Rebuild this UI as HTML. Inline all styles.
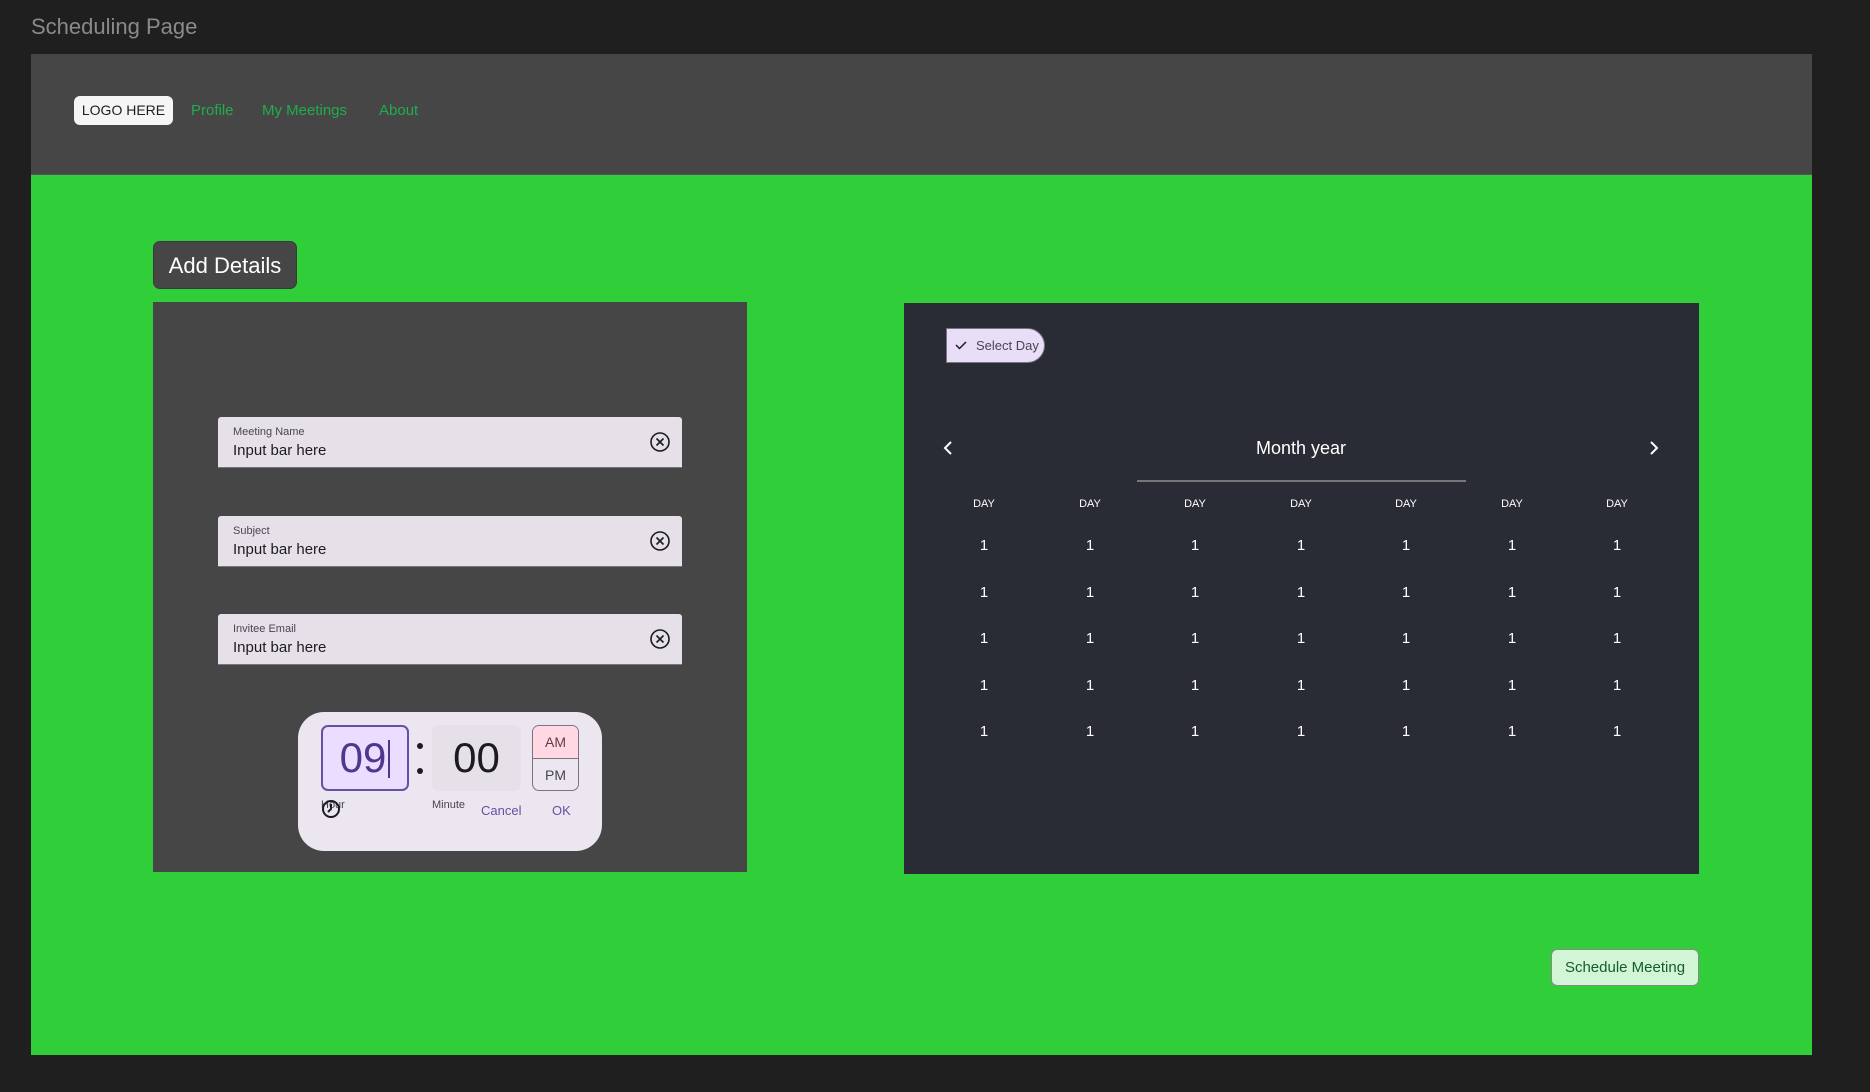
<!DOCTYPE html>
<html><head><meta charset="utf-8"><style>
*{margin:0;padding:0;box-sizing:border-box}
body{width:1870px;height:1092px;background:#1f1f1f;font-family:"Liberation Sans",sans-serif;position:relative;overflow:hidden}
.a{position:absolute}
.inp{position:absolute;left:218px;width:464px;height:51px;background:#e6e0e8;border-radius:3px 3px 0 0;border-bottom:1px solid #79747e}
.inp .l{position:absolute;left:15px;top:9px;font-size:11px;color:#49454f}
.inp .v{position:absolute;left:15px;top:25px;font-size:15px;color:#1d1b20}
.inp svg{position:absolute;left:431px;top:14px}
.c{position:absolute;width:60px;margin-left:-30px;text-align:center;color:#fff}
</style></head><body>
<div class="a" style="left:31px;top:14px;font-size:22px;color:#8a8a8a">Scheduling Page</div>
<div class="a" style="left:31px;top:54px;width:1781px;height:121px;background:#464646;border-bottom:1px solid #555"></div>
<div class="a" style="left:31px;top:175px;width:1781px;height:880px;background:#30ce38"></div>
<div class="a" style="left:74px;top:96px;width:99px;height:29px;background:#f5f5f5;border-radius:6px;font-size:14px;line-height:29px;text-align:center;color:#1e1e1e">LOGO HERE</div>
<div class="a" style="left:191px;top:102px;font-size:15px;color:#1fae4a">Profile</div>
<div class="a" style="left:262px;top:102px;font-size:15px;color:#1fae4a">My Meetings</div>
<div class="a" style="left:379px;top:102px;font-size:15px;color:#1fae4a">About</div>
<div class="a" style="left:153px;top:241px;width:144px;height:48px;background:#464646;border-radius:7px;border:1px solid #3a3a3a;color:#fff;font-size:22px;line-height:48px;text-align:center">Add Details</div>
<div class="a" style="left:153px;top:302px;width:594px;height:570px;background:#464646"></div>
<div class="inp" style="top:417px"><div class="l">Meeting Name</div><div class="v">Input bar here</div><svg width="22" height="22" viewBox="0 0 22 22"><circle cx="11" cy="11" r="9" fill="none" stroke="#1d1b20" stroke-width="1.6"/><path d="M7.5 7.5L14.5 14.5M14.5 7.5L7.5 14.5" stroke="#1d1b20" stroke-width="1.6"/></svg></div>
<div class="inp" style="top:516px"><div class="l">Subject</div><div class="v">Input bar here</div><svg width="22" height="22" viewBox="0 0 22 22"><circle cx="11" cy="11" r="9" fill="none" stroke="#1d1b20" stroke-width="1.6"/><path d="M7.5 7.5L14.5 14.5M14.5 7.5L7.5 14.5" stroke="#1d1b20" stroke-width="1.6"/></svg></div>
<div class="inp" style="top:614px"><div class="l">Invitee Email</div><div class="v">Input bar here</div><svg width="22" height="22" viewBox="0 0 22 22"><circle cx="11" cy="11" r="9" fill="none" stroke="#1d1b20" stroke-width="1.6"/><path d="M7.5 7.5L14.5 14.5M14.5 7.5L7.5 14.5" stroke="#1d1b20" stroke-width="1.6"/></svg></div>
<div class="a" style="left:298px;top:712px;width:304px;height:139px;background:#ece6f0;border-radius:26px"></div>
<div class="a" style="left:321px;top:725px;width:88px;height:66px;background:#eaddff;border:2px solid #6750a4;border-radius:7px;color:#4f378b;font-size:42px;line-height:62px;text-align:center">09<span style="display:inline-block;width:2px;height:38px;background:#4f378b;vertical-align:-6px;margin-left:2px"></span></div>
<div class="a" style="left:417px;top:743px;width:6px;height:6px;border-radius:3px;background:#1d1b20"></div>
<div class="a" style="left:417px;top:768px;width:6px;height:6px;border-radius:3px;background:#1d1b20"></div>
<div class="a" style="left:432px;top:725px;width:89px;height:66px;background:#e6e0e8;border-radius:7px;color:#1d1b20;font-size:42px;line-height:66px;text-align:center">00</div>
<div class="a" style="left:532px;top:725px;width:47px;height:66px;border:1px solid #79747e;border-radius:7px;overflow:hidden;font-size:14px;color:#1d1b20;text-align:center">
<div style="height:33px;line-height:32px;background:#ffd8e4;border-bottom:1px solid #79747e;color:#633b48">AM</div><div style="line-height:32px;color:#49454f">PM</div></div>
<div class="a" style="left:321px;top:799px;font-size:11px;color:#49454f">Hour</div>
<svg class="a" style="left:321px;top:799px" width="20" height="20" viewBox="0 0 20 20"><circle cx="10" cy="10" r="8" fill="none" stroke="#1d1b20" stroke-width="2"/><path d="M10 5V10L7 13" stroke="#1d1b20" stroke-width="2" fill="none"/></svg>
<div class="a" style="left:432px;top:799px;font-size:11px;color:#49454f">Minute</div>
<div class="a" style="left:481px;top:803px;font-size:13px;color:#6750a4">Cancel</div>
<div class="a" style="left:552px;top:803px;font-size:13px;color:#6750a4">OK</div>
<div class="a" style="left:904px;top:303px;width:795px;height:571px;background:#292c35"></div>
<div class="a" style="left:946px;top:328px;width:99px;height:35px;background:#e8def8;border:1px solid #79747e;border-radius:0 18px 18px 0;font-size:13px;color:#49454f;line-height:33px;padding-left:29px;white-space:nowrap">Select Day</div>
<svg class="a" style="left:954px;top:338px" width="14" height="14" viewBox="0 0 14 14"><path d="M2 7L5.5 10.5L12 4" stroke="#1d1b20" stroke-width="1.5" fill="none"/></svg>
<svg class="a" style="left:942px;top:440px" width="12" height="16" viewBox="0 0 12 16"><path d="M9 2L3 8L9 14" stroke="#fff" stroke-width="2" fill="none"/></svg>
<svg class="a" style="left:1648px;top:440px" width="12" height="16" viewBox="0 0 12 16"><path d="M3 2L9 8L3 14" stroke="#fff" stroke-width="2" fill="none"/></svg>
<div class="a" style="left:1151px;top:438px;width:300px;text-align:center;color:#fff;font-size:18px">Month year</div>
<div class="a" style="left:1137px;top:480px;width:329px;height:2px;background:#777"></div>
<div class="a" style="left:1551px;top:949px;width:148px;height:37px;background:#d1f5d5;border:1px solid #888;border-radius:6px;color:#155c33;font-size:15px;line-height:35px;text-align:center">Schedule Meeting</div>
<div class="a" style="left:0;top:0">
<div class="c" style="left:984px;top:498px;font-size:11px">DAY</div><div class="c" style="left:1090px;top:498px;font-size:11px">DAY</div><div class="c" style="left:1195px;top:498px;font-size:11px">DAY</div><div class="c" style="left:1301px;top:498px;font-size:11px">DAY</div><div class="c" style="left:1406px;top:498px;font-size:11px">DAY</div><div class="c" style="left:1512px;top:498px;font-size:11px">DAY</div><div class="c" style="left:1617px;top:498px;font-size:11px">DAY</div>
</div>
<div class="a" style="left:0;top:537px;font-size:15px">
<div class="c" style="left:984px;top:0">1</div><div class="c" style="left:1090px;top:0">1</div><div class="c" style="left:1195px;top:0">1</div><div class="c" style="left:1301px;top:0">1</div><div class="c" style="left:1406px;top:0">1</div><div class="c" style="left:1512px;top:0">1</div><div class="c" style="left:1617px;top:0">1</div>
<div class="c" style="left:984px;top:47px">1</div><div class="c" style="left:1090px;top:47px">1</div><div class="c" style="left:1195px;top:47px">1</div><div class="c" style="left:1301px;top:47px">1</div><div class="c" style="left:1406px;top:47px">1</div><div class="c" style="left:1512px;top:47px">1</div><div class="c" style="left:1617px;top:47px">1</div>
<div class="c" style="left:984px;top:93px">1</div><div class="c" style="left:1090px;top:93px">1</div><div class="c" style="left:1195px;top:93px">1</div><div class="c" style="left:1301px;top:93px">1</div><div class="c" style="left:1406px;top:93px">1</div><div class="c" style="left:1512px;top:93px">1</div><div class="c" style="left:1617px;top:93px">1</div>
<div class="c" style="left:984px;top:140px">1</div><div class="c" style="left:1090px;top:140px">1</div><div class="c" style="left:1195px;top:140px">1</div><div class="c" style="left:1301px;top:140px">1</div><div class="c" style="left:1406px;top:140px">1</div><div class="c" style="left:1512px;top:140px">1</div><div class="c" style="left:1617px;top:140px">1</div>
<div class="c" style="left:984px;top:186px">1</div><div class="c" style="left:1090px;top:186px">1</div><div class="c" style="left:1195px;top:186px">1</div><div class="c" style="left:1301px;top:186px">1</div><div class="c" style="left:1406px;top:186px">1</div><div class="c" style="left:1512px;top:186px">1</div><div class="c" style="left:1617px;top:186px">1</div>
</div>
</body></html>
